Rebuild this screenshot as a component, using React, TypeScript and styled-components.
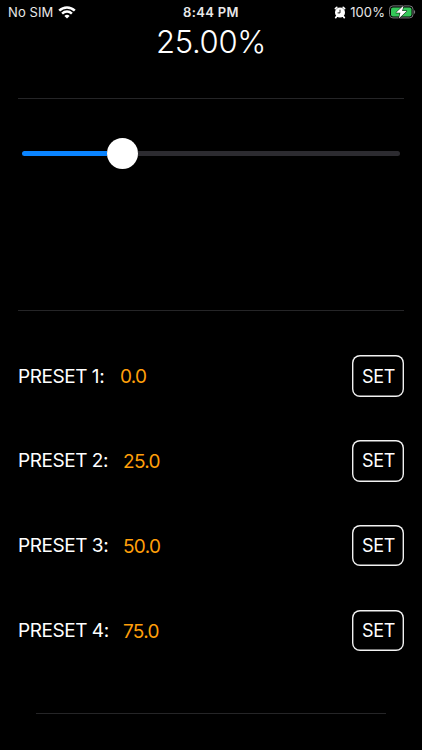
import React, { useState } from "react";
import styled, { createGlobalStyle } from "styled-components";

const GlobalStyle = createGlobalStyle`
  *, *::before, *::after { box-sizing: border-box; }
  html, body { margin: 0; background: #000; }
  body { overflow: hidden; }
`;

const Screen = styled.main`
  display: flex;
  flex-direction: column;
  width: 422px;
  height: 750px;
  background: #000;
  color: #fff;
  font-family: Inter, "Liberation Sans", sans-serif;
  overflow: hidden;
`;

const StatusBar = styled.header`
  display: grid;
  grid-template-columns: 1fr auto 1fr;
  align-items: center;
  height: 24px;
  padding: 0 6px 0 8px;
  font-size: 13px;
  line-height: 24px;
  color: #e8e8e8;
`;

const StatusGroup = styled.div<{ $end?: boolean }>`
  display: flex;
  align-items: center;
  justify-content: ${(p) => (p.$end ? "flex-end" : "flex-start")};
  gap: ${(p) => (p.$end ? 4 : 5)}px;
  white-space: nowrap;
`;

const StatusText = styled.span<{ $spacing: number }>`
  letter-spacing: ${(p) => p.$spacing}px;
`;

const Clock = styled.time`
  margin-left: -2px;
  font-weight: 570;
  font-size: 13px;
  letter-spacing: 0.35px;
`;

const Reading = styled.h1`
  margin: 0;
  height: 74px;
  font-size: 31px;
  font-weight: 340;
  line-height: 36px;
  letter-spacing: -0.35px;
  text-align: center;
`;

const Divider = styled.hr<{ $inset: number }>`
  flex: none;
  width: auto;
  height: 1px;
  margin: 0 ${(p) => p.$inset}px;
  border: 0;
  background: #252527;
`;

const SliderArea = styled.section`
  height: 211px;
  padding: 39px 22px 0;
`;

const Track = styled.div`
  display: flex;
  align-items: center;
  height: 31px;
`;

const Segment = styled.div<{ $filled?: boolean }>`
  height: 5px;
  flex: ${(p) => (p.$filled ? "0 0 85px" : "1")};
  border-radius: ${(p) => (p.$filled ? "3px 0 0 3px" : "0 3px 3px 0")};
  background: ${(p) => (p.$filled ? "#0a84ff" : "#2c2b30")};
`;

const Thumb = styled.div`
  flex: none;
  width: 31px;
  height: 31px;
  border-radius: 50%;
  background: #fff;
`;

const Presets = styled.section`
  display: flex;
  flex-direction: column;
  gap: 43.3px;
  height: 402px;
  padding: 44.4px 18px 0 18px;
`;

const PresetRow = styled.div`
  display: flex;
  align-items: center;
  height: 41.5px;
`;

const PresetName = styled.span<{ $width: number }>`
  width: ${(p) => p.$width}px;
  font-size: 19px;
  letter-spacing: -0.45px;
  white-space: nowrap;
`;

const PresetValue = styled.span`
  flex: 1;
  padding-top: 1px;
  font-size: 19px;
  letter-spacing: -0.7px;
  color: #ff9f0a;
`;

const SetButton = styled.button`
  width: 52px;
  height: 41.5px;
  padding: 0 0 0 1px;
  border: 0;
  border-radius: 8px;
  box-shadow: inset 0 0 0 1.4px #f2f2f2;
  background: transparent;
  color: #fff;
  font: inherit;
  font-size: 18px;
  letter-spacing: -0.3px;
`;

const WifiIcon = () => (
  <svg width="18" height="13" viewBox="0 0 18 13" fill="none" stroke="#fff" strokeWidth="2.5">
    <path d="M1.2 4.7C5.6 .3 12.4 .3 16.8 4.7" />
    <path d="M4.1 7.6C6.9 4.9 11.1 4.9 13.9 7.6" />
    <path d="M6.4 9.9C7.9 8.5 10.1 8.5 11.6 9.9L9 12.5Z" fill="#fff" stroke="none" />
  </svg>
);

const AlarmIcon = () => (
  <svg width="12" height="13" viewBox="0 0 12 13">
    <path d="M1.4 2.6L2.8 1.4M9.2 1.4L10.6 2.6M2.6 10.5L1.7 11.6M9.4 10.5L10.3 11.6" stroke="#fff" strokeWidth="1.7" strokeLinecap="round" />
    <circle cx="6" cy="6.6" r="5" fill="#fff" />
    <path d="M6 3.7V6.9H3.6" fill="none" stroke="#000" strokeWidth=".9" />
  </svg>
);

const BatteryIcon = () => (
  <svg width="27" height="14" viewBox="0 0 27 14">
    <rect x=".5" y=".9" width="23.5" height="12" rx="3.4" fill="none" stroke="#77777a" />
    <rect x="2" y="2.4" width="20.5" height="9" rx="2" fill="#34c759" />
    <path d="M25 5V9C26.6 8.4 26.6 5.6 25 5Z" fill="#77777a" />
    <path d="M14.6 .4L6.9 7.8H11.4L9.8 13.6L17.8 6.1H13.2Z" fill="#fff" stroke="#000" strokeWidth="1" paintOrder="stroke" strokeLinejoin="round" />
  </svg>
);

const initialPresets = [
  { id: 1, value: 0, labelWidth: 102 },
  { id: 2, value: 25, labelWidth: 105 },
  { id: 3, value: 50, labelWidth: 105 },
  { id: 4, value: 75, labelWidth: 105 },
];

export default function App() {
  const [level] = useState(25);
  const [presets, setPresets] = useState(initialPresets);
  const store = (id: number) =>
    setPresets((all) => all.map((p) => (p.id === id ? { ...p, value: level } : p)));

  return (
    <>
      <GlobalStyle />
      <Screen>
        <StatusBar>
          <StatusGroup>
            <StatusText $spacing={0.1}>No SIM</StatusText>
            <WifiIcon />
          </StatusGroup>
          <Clock>8:44 PM</Clock>
          <StatusGroup $end>
            <AlarmIcon />
            <StatusText $spacing={0.1}>100%</StatusText>
            <BatteryIcon />
          </StatusGroup>
        </StatusBar>
        <Reading>{level.toFixed(2)}%</Reading>
        <Divider $inset={18} />
        <SliderArea>
          <Track>
            <Segment $filled />
            <Thumb />
            <Segment />
          </Track>
        </SliderArea>
        <Divider $inset={18} />
        <Presets>
          {presets.map((p) => (
            <PresetRow key={p.id}>
              <PresetName $width={p.labelWidth}>PRESET {p.id}:</PresetName>
              <PresetValue>{p.value.toFixed(1)}</PresetValue>
              <SetButton type="button" onClick={() => store(p.id)}>SET</SetButton>
            </PresetRow>
          ))}
        </Presets>
        <Divider $inset={36} />
      </Screen>
    </>
  );
}
